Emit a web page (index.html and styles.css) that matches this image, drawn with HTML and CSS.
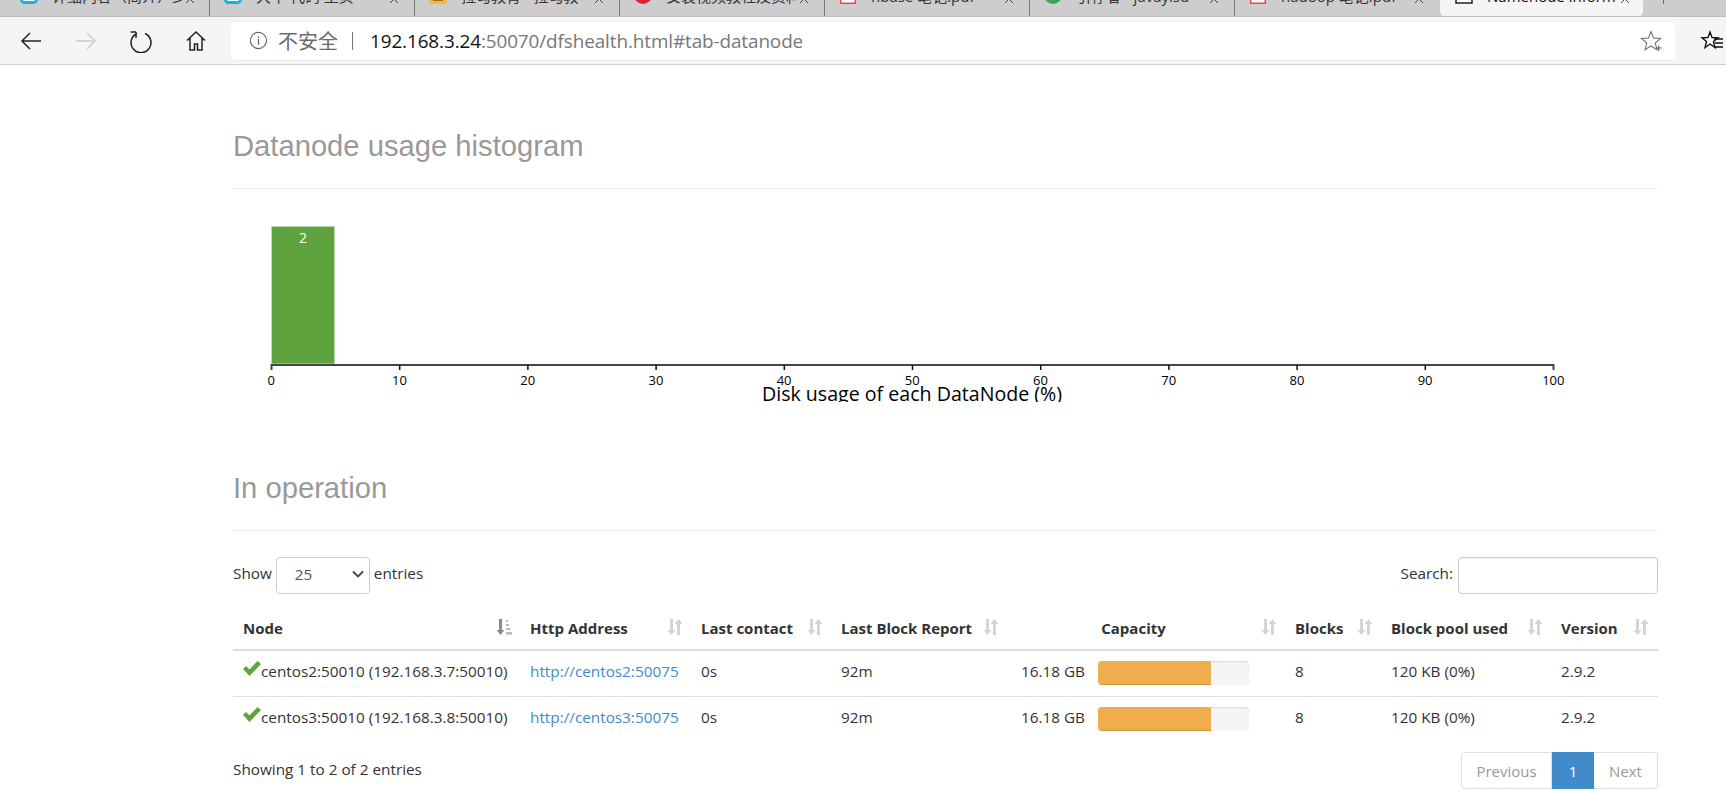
FILE: index.html
```html
<!DOCTYPE html>
<html lang="zh">
<head>
<meta charset="utf-8">
<title>Namenode information</title>
<link rel="stylesheet" href="styles.css">
</head>
<body>
<svg class="defs" width="0" height="0" aria-hidden="true">
  <symbol id="sort" viewBox="0 0 16 18"><path d="M3 1h3v11h2.500L4.500 17 .5 12H3zM10 17V6H7.500l4-5 4 5H13v11z" fill="currentColor"/></symbol>
  <symbol id="sort-active" viewBox="0 0 16 18"><path d="M3 1h3v11h2.500L4.500 17 .5 12H3z" fill="#8a8a8a"/><path d="M10 2h2v2h-2zM10 6h3v2h-3zM10 10h4.500v2H10zM10 14h6v2.500h-6z" fill="#bcbcbc"/></symbol>
  <symbol id="ok" viewBox="0 0 18 15"><path d="M0 8l3-3 3.500 3.500L14.500 0 18 3 6.500 15z" fill="#5fa33e"/></symbol>
  <symbol id="close" viewBox="0 0 10 10"><path d="M1 1l8 8M9 1L1 9" stroke="#444" stroke-width="1" fill="none"/></symbol>
</svg>

<header class="chrome">
  <div class="tabstrip">
    <div class="tab"><svg class="fav" viewBox="0 0 18 18"><rect x="1.500" y="1.500" width="15" height="15" rx="3" fill="#fff" stroke="#1ab0e8" stroke-width="3"/></svg><span class="tab-title">详细内容（简介）少</span><svg class="tab-close"><use href="#close"/></svg></div>
    <div class="tab"><svg class="fav" viewBox="0 0 18 18"><rect x="1.500" y="1.500" width="15" height="15" rx="3" fill="#fff" stroke="#1ab0e8" stroke-width="3"/></svg><span class="tab-title">大牛 代码 主页</span><svg class="tab-close"><use href="#close"/></svg></div>
    <div class="tab"><svg class="fav" viewBox="0 0 18 18"><rect width="18" height="18" rx="3" fill="#f5b942"/><rect x="4" y="12" width="10" height="3" fill="#a06a14"/></svg><span class="tab-title">拉勾教育 - 拉勾教</span><svg class="tab-close"><use href="#close"/></svg></div>
    <div class="tab"><svg class="fav" viewBox="0 0 18 18"><circle cx="9" cy="9" r="9" fill="#e02433"/><rect x="4" y="9" width="10" height="4" fill="#fff"/></svg><span class="tab-title">安装视频教程及资料</span><svg class="tab-close"><use href="#close"/></svg></div>
    <div class="tab"><svg class="fav" viewBox="0 0 18 18"><rect x="1" y="0" width="16" height="18" fill="#f04545"/><rect x="2.500" y="12" width="13" height="4.500" fill="#fff"/></svg><span class="tab-title">hbase 笔记.pdf</span><svg class="tab-close"><use href="#close"/></svg></div>
    <div class="tab"><svg class="fav" viewBox="0 0 18 18"><circle cx="9" cy="9" r="9" fill="#3aa655"/></svg><span class="tab-title">引荐者 - javaylsd</span><svg class="tab-close"><use href="#close"/></svg></div>
    <div class="tab tab-before-active"><svg class="fav" viewBox="0 0 18 18"><rect x="1" y="0" width="16" height="18" fill="#f04545"/><rect x="2.500" y="12" width="13" height="4.500" fill="#fff"/></svg><span class="tab-title">hadoop 笔记.pdf</span><svg class="tab-close"><use href="#close"/></svg></div>
    <div class="tab tab-active"><svg class="fav" viewBox="0 0 18 18"><rect x="1" y="-4" width="16" height="21" fill="#fff" stroke="#222" stroke-width="1.500"/></svg><span class="tab-title">Namenode inform</span><svg class="tab-close"><use href="#close"/></svg></div>
    <div class="newtab"></div>
  </div>
  <div class="toolbar">
    <svg class="tool" viewBox="0 0 24 24"><path d="M22 12H3M11 4l-8 8 8 8" fill="none" stroke="#222" stroke-width="1.500"/></svg>
    <svg class="tool" viewBox="0 0 24 24"><path d="M2 12h19M13 4l8 8-8 8" fill="none" stroke="#ccc" stroke-width="1.500"/></svg>
    <svg class="tool" viewBox="0 0 24 24"><path d="M8 3.500a10 10 0 1 0 8 0M7 2v6M7 2H1.500" transform="translate(0 1)" fill="none" stroke="#222" stroke-width="1.500"/></svg>
    <svg class="tool" viewBox="0 0 24 24"><path d="M3 11.500L12 3l9 8.500M6 9v12h4.500v-6h3v6H18V9" fill="none" stroke="#222" stroke-width="1.500"/></svg>
    <div class="urlbar">
      <svg class="info" viewBox="0 0 20 20"><circle cx="10" cy="10" r="8.500" fill="none" stroke="#666" stroke-width="1.200"/><path d="M10 8.500v6M10 5.500v1.500" stroke="#666" stroke-width="1.300"/></svg>
      <span class="insecure">不安全</span>
      <span class="url-sep"></span>
      <span class="url"><span class="url-host">192.168.3.24</span>:50070/dfshealth.html#tab-datanode</span>
      <svg class="star" viewBox="0 0 22 22"><path d="M11 1.500l2.600 6.600 7 .4-5.400 4.500 1.800 6.800L11 16l-6 3.800 1.800-6.800L1.400 8.500l7-.4z" fill="none" stroke="#777" stroke-width="1.100"/><path d="M16 18h5.500M18.700 15.500v5.500" stroke="#555" stroke-width="1"/></svg>
    </div>
    <svg class="favbar" viewBox="0 0 22 22"><path d="M9 2l2 5.500 6 .3-4.500 3.700 1.500 6L9 14l-5 3.500 1.500-6L1 7.800l6-.3z" fill="#fff" stroke="#111" stroke-width="1.400"/><path d="M13 9h9M14 13h8M13 17h9" stroke="#111" stroke-width="1.400"/></svg>
  </div>
</header>

<main class="page">
  <section class="histogram">
    <h2 class="section-title">Datanode usage histogram</h2>
    <svg class="chart" viewBox="0 0 1425 213" width="1425" height="213">
      <rect class="bar" x="38.500" y="37.500" width="63" height="137.500"/>
      <text class="bar-label" x="70" y="54">2</text>
      <path class="axis" d="M38.500 181v-5H1320.500v5"/>
      <path class="axis-tick" d="M166.700 176v5M294.900 176v5M423.100 176v5M551.300 176v5M679.500 176v5M807.700 176v5M935.900 176v5M1064.100 176v5M1192.300 176v5"/>
      <g class="tick-labels">
        <text x="38.300" y="196">0</text><text x="166.500" y="196">10</text><text x="294.700" y="196">20</text><text x="422.900" y="196">30</text><text x="551.100" y="196">40</text><text x="679.300" y="196">50</text><text x="807.500" y="196">60</text><text x="935.700" y="196">70</text><text x="1063.900" y="196">80</text><text x="1192.100" y="196">90</text><text x="1320.300" y="196">100</text>
      </g>
      <text class="axis-title" x="679" y="212">Disk usage of each DataNode (%)</text>
    </svg>
  </section>

  <section class="operation">
    <h2 class="section-title">In operation</h2>
    <div class="controls">
      <label class="ctl ctl-show">Show <span class="select"><span>25</span><svg viewBox="0 0 12 8"><path d="M1 1.500l5 5 5-5" fill="none" stroke="#444" stroke-width="1.800"/></svg></span> entries</label>
      <label class="ctl">Search: <span class="search"></span></label>
    </div>
    <table class="nodes">
      <colgroup>
        <col class="c-node"><col class="c-http"><col class="c-contact"><col class="c-report"><col class="c-capval"><col class="c-capbar"><col class="c-blocks"><col class="c-pool"><col class="c-ver">
      </colgroup>
      <thead>
        <tr>
          <th>Node<svg class="sort sort-on"><use href="#sort-active"/></svg></th>
          <th>Http Address<svg class="sort"><use href="#sort"/></svg></th>
          <th>Last contact<svg class="sort"><use href="#sort"/></svg></th>
          <th>Last Block Report<svg class="sort"><use href="#sort"/></svg></th>
          <th colspan="2" class="th-capacity">Capacity<svg class="sort"><use href="#sort"/></svg></th>
          <th>Blocks<svg class="sort"><use href="#sort"/></svg></th>
          <th>Block pool used<svg class="sort"><use href="#sort"/></svg></th>
          <th>Version<svg class="sort"><use href="#sort"/></svg></th>
        </tr>
      </thead>
      <tbody>
        <tr>
          <td><svg class="ok"><use href="#ok"/></svg>centos2:50010 (192.168.3.7:50010)</td>
          <td><a href="#">http://centos2:50075</a></td>
          <td>0s</td>
          <td>92m</td>
          <td class="capval">16.18 GB</td>
          <td class="capbar"><div class="progress"><div class="progress-fill"></div></div></td>
          <td>8</td>
          <td>120 KB (0%)</td>
          <td>2.9.2</td>
        </tr>
        <tr>
          <td><svg class="ok"><use href="#ok"/></svg>centos3:50010 (192.168.3.8:50010)</td>
          <td><a href="#">http://centos3:50075</a></td>
          <td>0s</td>
          <td>92m</td>
          <td class="capval">16.18 GB</td>
          <td class="capbar"><div class="progress"><div class="progress-fill"></div></div></td>
          <td>8</td>
          <td>120 KB (0%)</td>
          <td>2.9.2</td>
        </tr>
      </tbody>
    </table>
    <div class="footer">
      <div class="info-text">Showing 1 to 2 of 2 entries</div>
      <div class="pager"><span class="pg pg-first">Previous</span><span class="pg pg-on">1</span><span class="pg pg-last">Next</span></div>
    </div>
  </section>
</main>
</body>
</html>
```

FILE: styles.css
```css
* { box-sizing: border-box; }
html, body { margin: 0; height: 791px; overflow: hidden; background: #fff; }
body { font-family: "Open Sans", "Noto Sans CJK SC", sans-serif; font-size: 15.3px; color: #333; }
.defs { display: block; height: 0; }

/* browser chrome */
.chrome { height: 65px; border-bottom: 1px solid #d0d0d0; background: #f5f5f5; }
.tabstrip { height: 17px; background: #cdcdcd; border-bottom: 1px solid #bdbdbd; display: flex; overflow: hidden; align-items: flex-end; }
.tab { flex: 0 0 205px; height: 17px; display: flex; align-items: flex-start; padding-left: 14px; border-right: 1px solid #777; }
.tab:first-child { flex-basis: 210px; padding-left: 20px; }
.tab-before-active { border-right: 0; border-radius: 0 0 6px 0; }
.tab-active { background: #f5f5f5; border-right: 0; border-radius: 0 0 6px 6px; flex-basis: 203px; margin-bottom: -1px; height: 18px; padding-left: 15px; }
.fav { width: 18px; height: 18px; margin-top: -13px; flex: none; }
.tab-title { margin: -15px 0 0 14px; font-size: 15px; line-height: 24px; color: #333; white-space: nowrap; width: 130px; overflow: hidden; flex: none; }
.tab-close { width: 10px; height: 10px; margin: -5px 0 0 3px; flex: none; }
.tab-active .tab-title { color: #111; }
.newtab { width: 1px; height: 5px; background: #666; margin: 0 0 12px 20px; align-self: flex-end; }
.toolbar { height: 47px; display: flex; align-items: center; padding-left: 19px; }
.tool { width: 24px; height: 24px; margin-right: 31px; flex: none; }
.urlbar { margin-left: -8px; width: 1444px; height: 38px; background: #fff; border-radius: 4px; display: flex; align-items: center; padding-left: 18px; box-shadow: 0 1px 1px rgba(0,0,0,.04); flex: none; }
.info { width: 19px; height: 19px; flex: none; }
.insecure { margin-left: 10px; font-size: 20px; color: #6a6a6a; white-space: nowrap; }
.url-sep { width: 1px; height: 18px; background: #777; margin: 0 17px 0 14px; }
.url { font-family: "Open Sans", sans-serif; font-size: 18.9px; color: #777; white-space: nowrap; letter-spacing: -.1px; }
.url-host { color: #111; }
.star { width: 22px; height: 22px; margin-left: auto; margin-right: 13px; flex: none; }
.favbar { width: 24px; height: 22px; margin-left: 25px; flex: none; }

/* page */
.page { padding: 0 68px 0 233px; }
.section-title { margin: 0; padding-bottom: 22px; font: 400 29.2px/40px "Liberation Sans", Arial, sans-serif; color: #999; border-bottom: 1px solid #eee; }
.histogram .section-title { margin-top: 61px; }
.operation .section-title { margin-top: 66px; }

.chart { display: block; }
.bar { fill: #5fa33e; stroke: #bcd9ae; stroke-width: 1; }
.bar-label { fill: #fff; font-size: 14px; text-anchor: middle; }
.axis { fill: none; stroke: #444; stroke-width: 2; }
.axis-tick { fill: none; stroke: #111; stroke-width: 1.500; }
.tick-labels text { fill: #000; font-size: 13px; text-anchor: middle; }
.axis-title { fill: #000; font-size: 19.6px; text-anchor: middle; }

.controls { margin-top: 26px; height: 37px; display: flex; justify-content: space-between; align-items: flex-start; }
.ctl { display: flex; align-items: flex-start; gap: 5px; line-height: 33px; }
.ctl-show { gap: 4px; }
.select { width: 94px; height: 37px; border: 1px solid #ccc; border-radius: 4px; display: flex; align-items: center; justify-content: space-between; padding: 0 5px 3px 18px; color: #555; background: #fff; }
.select svg { width: 12px; height: 8px; }
.search { width: 200px; height: 37px; border: 1px solid #ccc; border-radius: 4px; display: block; box-shadow: inset 0 1px 1px rgba(0,0,0,.075); }

.nodes { margin-top: 12px; width: 1425px; table-layout: fixed; border-collapse: collapse; }
.c-node { width: 288px; }
.c-http { width: 171px; }
.c-contact { width: 140px; }
.c-report { width: 176px; }
.c-capval { width: 85px; }
.c-capbar { width: 193px; }
.c-blocks { width: 96px; }
.c-pool { width: 170px; }
.c-ver { width: 106px; }
.nodes th { height: 44px; padding: 0 9px; text-align: left; font-size: 15px; font-weight: 700; position: relative; border-bottom: 2px solid #ddd; white-space: nowrap; color: #333; }
.nodes th:first-child, .nodes td:first-child { padding-left: 10px; }
.th-capacity.th-capacity { text-align: center; padding-right: 36px; }
.sort { position: absolute; right: 9px; top: 12px; width: 16px; height: 18px; color: #d4d4d4; }
.nodes td { height: 46px; padding: 0 9px 4px; white-space: nowrap; border-top: 1px solid #ddd; color: #333; }
.nodes thead + tbody tr:first-child td { border-top: 0; }
.nodes a { color: #428bca; text-decoration: none; }
.ok { width: 18px; height: 15px; vertical-align: 1px; }
.nodes .capval { text-align: right; padding: 0 8px 4px 0; }
.nodes .capbar { padding: 0 0 0 5px; }
.progress { width: 151px; height: 24px; background: #f5f5f5; border-radius: 4px; overflow: hidden; box-shadow: inset 0 1px 2px rgba(0,0,0,.1); }
.progress-fill { width: 75%; height: 100%; background: #f0ad4e; box-shadow: inset 0 -1px 0 rgba(0,0,0,.15); }

.footer { margin-top: 10px; display: flex; justify-content: space-between; align-items: center; }
.info-text { padding-bottom: 3px; }
.pager { display: flex; height: 37px; font-size: 15px; }
.pg { display: flex; align-items: center; justify-content: center; border: 1px solid #ddd; color: #999; background: #fff; }
.pg-first { width: 91px; border-radius: 4px 0 0 4px; }
.pg-on { width: 42px; background: #428bca; border-color: #428bca; color: #fff; }
.pg-last { width: 64px; border-radius: 0 4px 4px 0; border-left: 0; }
```
